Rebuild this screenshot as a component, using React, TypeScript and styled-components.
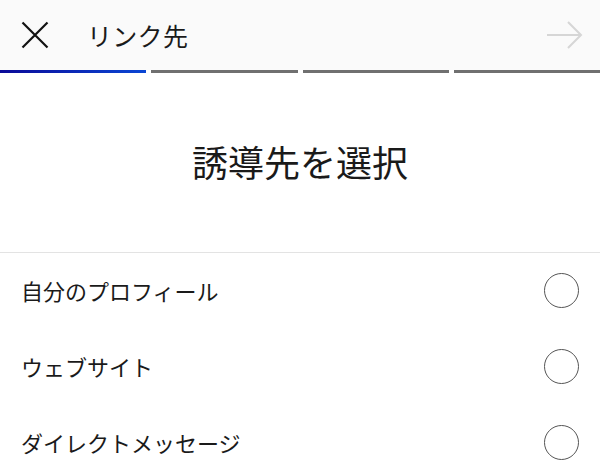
import React from "react";
import styled, { createGlobalStyle } from "styled-components";

const Global = createGlobalStyle`
  html, body { margin: 0; padding: 0; background: #ffffff; }
  body { font-family: "Noto Sans CJK JP", "Noto Sans", sans-serif; color: #1a1a1a; }
`;

const Page = styled.div`
  width: 600px;
  height: 475px;
  overflow: hidden;
  background: #ffffff;
`;

const Header = styled.header`
  height: 70px;
  background: #fafafa;
  display: flex;
  align-items: center;
  padding: 0 17px 0 21px;
  box-sizing: border-box;
`;

const IconButton = styled.div`
  width: 28px;
  height: 28px;
  display: flex;
  align-items: center;
  justify-content: center;
`;

const HeaderTitle = styled.h1`
  margin: 0 0 0 38px;
  flex: 1;
  font-size: 25px;
  font-weight: 400;
  letter-spacing: 0.3px;
  color: #1a1a1a;
`;

const Progress = styled.div`
  display: flex;
  gap: 5px;
  height: 3px;
`;

const Segment = styled.div<{ $active?: boolean }>`
  flex: 1;
  background: ${(p) =>
    p.$active ? "linear-gradient(to right, #0a0a98, #0a46d4)" : "#707070"};
`;

const TitleSection = styled.section`
  height: 180px;
  display: flex;
  align-items: center;
  justify-content: center;
  border-bottom: 1px solid #e3e3e3;
  padding-bottom: 4px;
  box-sizing: border-box;
`;

const Title = styled.h2`
  margin: 0;
  font-size: 36px;
  font-weight: 400;
  color: #1a1a1a;
`;

const List = styled.ul`
  margin: 0;
  padding: 0;
  list-style: none;
`;

const Row = styled.li`
  height: 76px;
  display: flex;
  align-items: center;
  justify-content: space-between;
  padding: 0 21px 0 21px;
  margin-top: -1px;
  & + & {
    margin-top: 0;
  }
`;

const Label = styled.span`
  font-size: 22px;
  color: #1a1a1a;
`;

const Radio = styled.span`
  width: 33px;
  height: 33px;
  border-radius: 50%;
  border: 1.5px solid #555;
  box-sizing: content-box;
`;

const CloseIcon = () => (
  <svg width="28" height="28" viewBox="0 0 28 28">
    <path d="M1.5 1.5 L26.5 26.5 M26.5 1.5 L1.5 26.5" stroke="#111" strokeWidth="2.2" fill="none" />
  </svg>
);

const ArrowIcon = () => (
  <svg width="37" height="28" viewBox="0 0 37 28">
    <path d="M1 14 H35 M22 1 L35 14 L22 27" stroke="#d6d6d6" strokeWidth="2" fill="none" />
  </svg>
);

const items = ["自分のプロフィール", "ウェブサイト", "ダイレクトメッセージ"];

export default function App() {
  return (
    <Page>
      <Global />
      <Header>
        <IconButton>
          <CloseIcon />
        </IconButton>
        <HeaderTitle>リンク先</HeaderTitle>
        <ArrowIcon />
      </Header>
      <Progress>
        <Segment $active />
        <Segment />
        <Segment />
        <Segment />
      </Progress>
      <TitleSection>
        <Title>誘導先を選択</Title>
      </TitleSection>
      <List>
        {items.map((t) => (
          <Row key={t}>
            <Label>{t}</Label>
            <Radio />
          </Row>
        ))}
      </List>
    </Page>
  );
}
